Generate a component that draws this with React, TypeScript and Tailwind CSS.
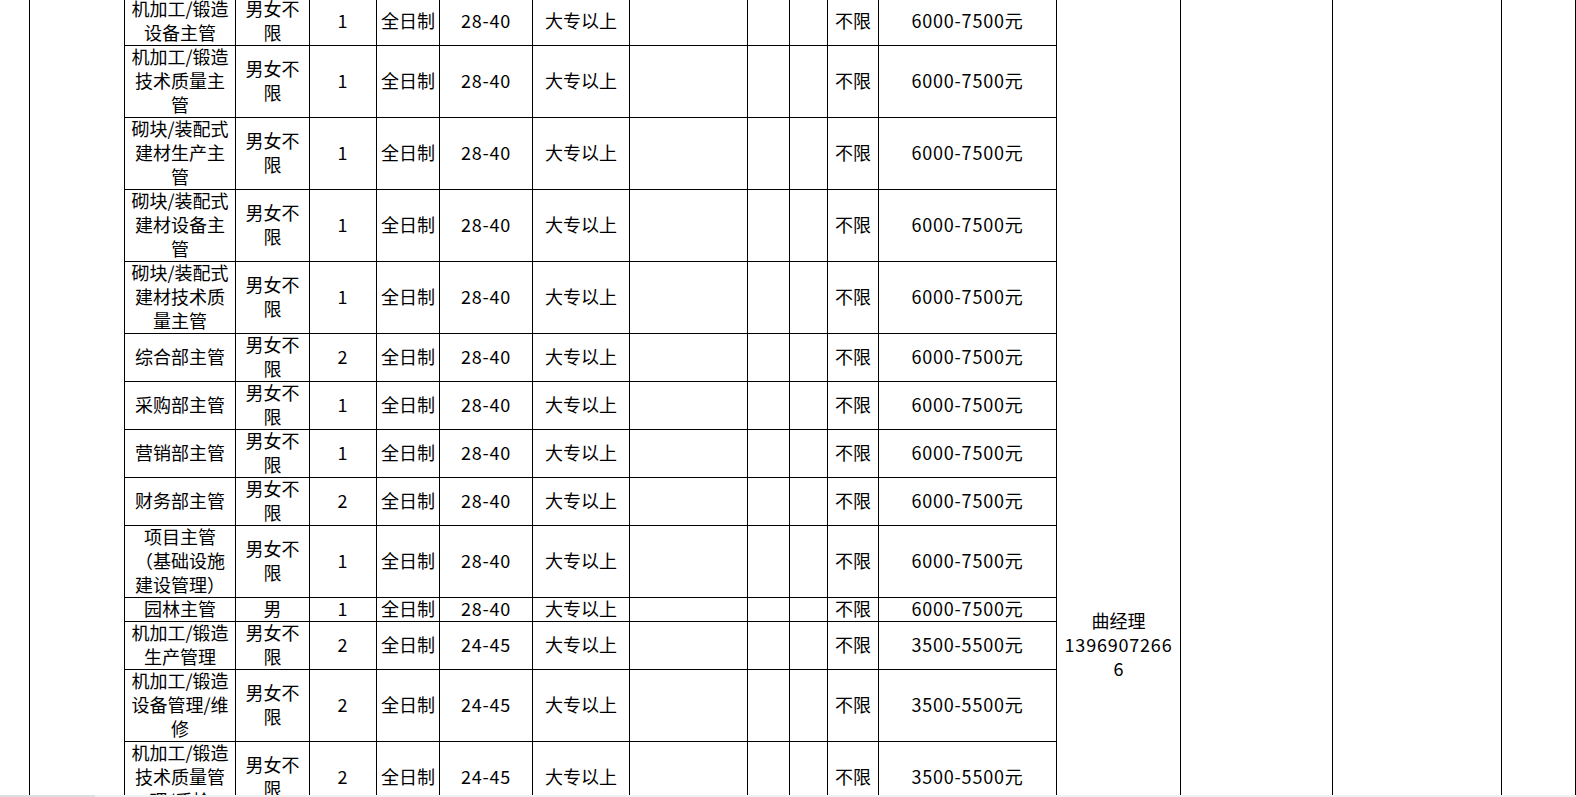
import React from 'react';

type Row = {
  name: string;
  sex: string;
  count: string;
  age: string;
  pay: string;
};

const ROWS: Row[] = [
  { name: '机加工/锻造\n设备主管', sex: '男女不\n限', count: '1', age: '28-40', pay: '6000-7500元' },
  { name: '机加工/锻造\n技术质量主\n管', sex: '男女不\n限', count: '1', age: '28-40', pay: '6000-7500元' },
  { name: '砌块/装配式\n建材生产主\n管', sex: '男女不\n限', count: '1', age: '28-40', pay: '6000-7500元' },
  { name: '砌块/装配式\n建材设备主\n管', sex: '男女不\n限', count: '1', age: '28-40', pay: '6000-7500元' },
  { name: '砌块/装配式\n建材技术质\n量主管', sex: '男女不\n限', count: '1', age: '28-40', pay: '6000-7500元' },
  { name: '综合部主管', sex: '男女不\n限', count: '2', age: '28-40', pay: '6000-7500元' },
  { name: '采购部主管', sex: '男女不\n限', count: '1', age: '28-40', pay: '6000-7500元' },
  { name: '营销部主管', sex: '男女不\n限', count: '1', age: '28-40', pay: '6000-7500元' },
  { name: '财务部主管', sex: '男女不\n限', count: '2', age: '28-40', pay: '6000-7500元' },
  { name: '项目主管\n（基础设施\n建设管理）', sex: '男女不\n限', count: '1', age: '28-40', pay: '6000-7500元' },
  { name: '园林主管', sex: '男', count: '1', age: '28-40', pay: '6000-7500元' },
  { name: '机加工/锻造\n生产管理', sex: '男女不\n限', count: '2', age: '24-45', pay: '3500-5500元' },
  { name: '机加工/锻造\n设备管理/维\n修', sex: '男女不\n限', count: '2', age: '24-45', pay: '3500-5500元' },
  { name: '机加工/锻造\n技术质量管\n理/质检', sex: '男女不\n限', count: '2', age: '24-45', pay: '3500-5500元' },
];

const cell = 'flex items-center justify-center pb-[4px] text-center whitespace-pre-line border-r border-b border-black';
const num = `${cell} tracking-[0.8px]`;
const tall = 'row-span-14 border-r border-black';

export default function App() {
  return (
    <div className="relative h-[797px] overflow-hidden bg-white text-black font-['Noto_Sans_CJK_SC',sans-serif] text-[18px] leading-[24px]">
      <div className="-mt-[2px] grid grid-cols-[30px_95px_111px_74px_67px_63px_93px_97px_118px_42px_38px_51px_178px_124px_152px_169px_74px] grid-rows-[48px_72px_72px_72px_72px_48px_48px_48px_48px_72px_24px_48px_72px_72px]">
        {ROWS.map((r, i) => (
          <React.Fragment key={i}>
            {i === 0 && (
              <>
                <div className={tall} />
                <div className={tall} />
              </>
            )}
            <div className={cell}>{r.name}</div>
            <div className={cell}>{r.sex}</div>
            <div className={num}>{r.count}</div>
            <div className={cell}>全日制</div>
            <div className={num}>{r.age}</div>
            <div className={cell}>大专以上</div>
            <div className={cell} />
            <div className={cell} />
            <div className={cell} />
            <div className={cell}>不限</div>
            <div className={num}>{r.pay}</div>
            {i === 0 && (
              <>
                <div className={`${tall} flex flex-col items-center pt-[610px] text-center`}>
                  <span>曲经理</span>
                  <span className="tracking-[0.8px]">1396907266</span>
                  <span>6</span>
                </div>
                <div className={tall} />
                <div className={tall} />
                <div className={tall} />
              </>
            )}
          </React.Fragment>
        ))}
      </div>

      {/* horizontal scroll strip at the very bottom */}
      <div className="absolute bottom-0 left-0 right-0 flex h-[2px]">
        <div className="w-[95px] bg-[#dedede]" />
        <div className="flex-1 bg-[#f0f0f0]" />
      </div>
    </div>
  );
}
